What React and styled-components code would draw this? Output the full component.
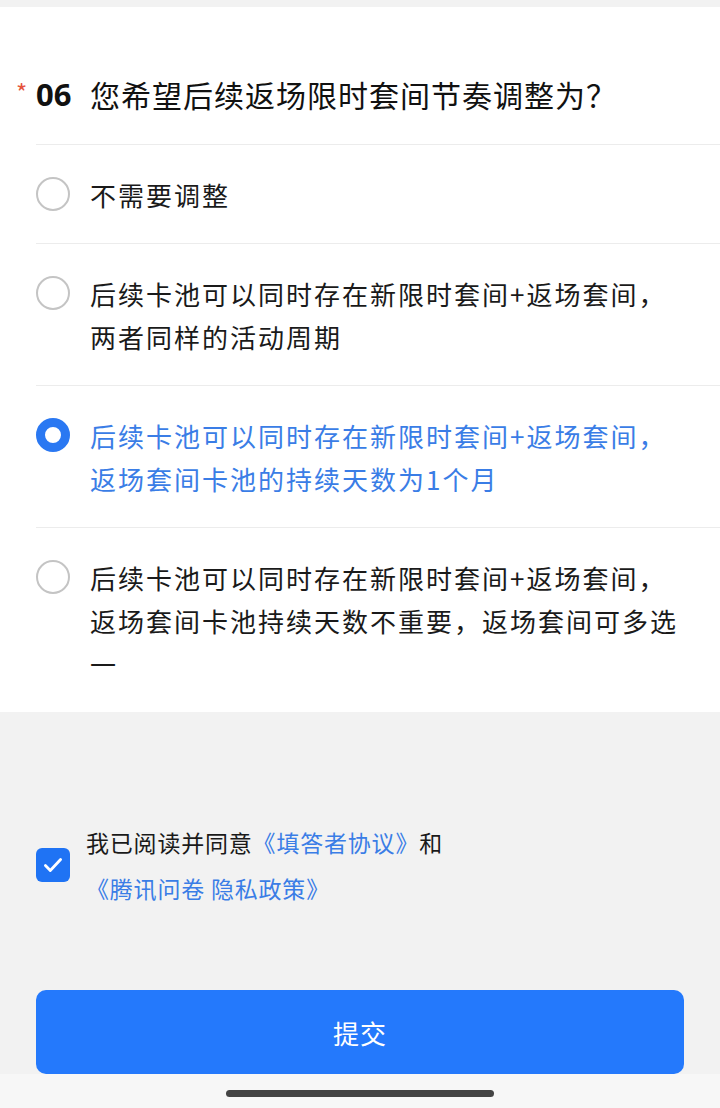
import React from "react";
import styled, { createGlobalStyle } from "styled-components";

const Global = createGlobalStyle`
  html, body { margin: 0; padding: 0; background: #f2f2f2; }
  body { font-family: "Noto Sans CJK SC", "Noto Sans", sans-serif; }
`;

const Page = styled.div`
  width: 720px;
  height: 1108px;
  background: #f2f2f2;
  display: flex;
  flex-direction: column;
  overflow: hidden;
`;

const Card = styled.section`
  margin-top: 7px;
  background: #ffffff;
  display: flex;
  flex-direction: column;
`;

const Title = styled.h2`
  margin: 0;
  padding: 65px 20px 28px 16px;
  display: flex;
  align-items: center;
  font-size: 30px;
  line-height: 44px;
  font-weight: 400;
  color: #111;
  letter-spacing: 1px;
`;

const Star = styled.span`
  color: #e5533d;
  font-size: 24px;
  width: 20px;
  align-self: flex-start;
  line-height: 40px;
`;

const Num = styled.span`
  font-family: "Noto Sans", sans-serif;
  font-weight: 700;
  font-size: 31px;
  width: 54px;
  letter-spacing: 0;
`;

const OptionList = styled.div`
  display: flex;
  flex-direction: column;
`;

const Option = styled.label`
  margin-left: 36px;
  border-top: 1px solid #ececec;
  padding: 28px 30px 27px 0;
  display: flex;
  align-items: flex-start;
  gap: 20px;
`;

const Radio = styled.span`
  flex: none;
  box-sizing: border-box;
  width: 34px;
  height: 34px;
  margin-top: 4px;
  border-radius: 50%;
  border: ${(p) => (p.$checked ? "9px solid #2a78f2" : "2px solid #c4c4c4")};
  background: #fff;
`;

const OptionText = styled.span`
  font-size: 26px;
  line-height: 43px;
  letter-spacing: 2px;
  color: ${(p) => (p.$checked ? "#3a7de6" : "#1a1a1a")};
  width: 600px;
`;

const Footer = styled.div`
  flex: 1;
  display: flex;
  flex-direction: column;
  padding: 0 36px;
`;

const Agree = styled.div`
  margin-top: 107px;
  display: flex;
  align-items: center;
  gap: 16px;
`;

const Check = styled.span`
  flex: none;
  width: 34px;
  height: 34px;
  border-radius: 6px;
  background: #1f73f4;
  display: flex;
  align-items: center;
  justify-content: center;
`;

const AgreeText = styled.p`
  margin: 0;
  font-size: 23px;
  line-height: 46px;
  letter-spacing: 0.8px;
  color: #1a1a1a;
`;

const Link = styled.span`
  color: #3a7de6;
`;

const Submit = styled.button`
  margin-top: 79px;
  height: 84px;
  width: 648px;
  border: none;
  border-radius: 10px;
  background: #2479fc;
  color: #fff;
  font-family: inherit;
  font-size: 26px;
  letter-spacing: 1px;
`;

const HomeBar = styled.div`
  height: 34px;
  background: #f7f7f7;
  display: flex;
  justify-content: center;
  padding-top: 16px;
  box-sizing: border-box;
`;

const Indicator = styled.span`
  width: 268px;
  height: 7px;
  border-radius: 4px;
  background: #444;
`;

const options = [
  { text: "不需要调整" },
  { text: "后续卡池可以同时存在新限时套间+返场套间，两者同样的活动周期" },
  { text: "后续卡池可以同时存在新限时套间+返场套间，返场套间卡池的持续天数为1个月", checked: true },
  { text: "后续卡池可以同时存在新限时套间+返场套间，返场套间卡池持续天数不重要，返场套间可多选一" },
];

export default function App() {
  return (
    <Page>
      <Global />
      <Card>
        <Title>
          <Star>*</Star>
          <Num>06</Num>
          您希望后续返场限时套间节奏调整为？
        </Title>
        <OptionList>
          {options.map((o, i) => (
            <Option key={i}>
              <Radio $checked={o.checked} />
              <OptionText $checked={o.checked}>{o.text}</OptionText>
            </Option>
          ))}
        </OptionList>
      </Card>
      <Footer>
        <Agree>
          <Check>
            <svg width="26" height="26" viewBox="0 0 24 24" fill="none">
              <path d="M5 12.5l4.5 4.5L19 7" stroke="#fff" strokeWidth="2.6" strokeLinecap="round" strokeLinejoin="round" />
            </svg>
          </Check>
          <AgreeText>
            我已阅读并同意<Link>《填答者协议》</Link>和
            <br />
            <Link>《腾讯问卷 隐私政策》</Link>
          </AgreeText>
        </Agree>
        <Submit>提交</Submit>
      </Footer>
      <HomeBar>
        <Indicator />
      </HomeBar>
    </Page>
  );
}
